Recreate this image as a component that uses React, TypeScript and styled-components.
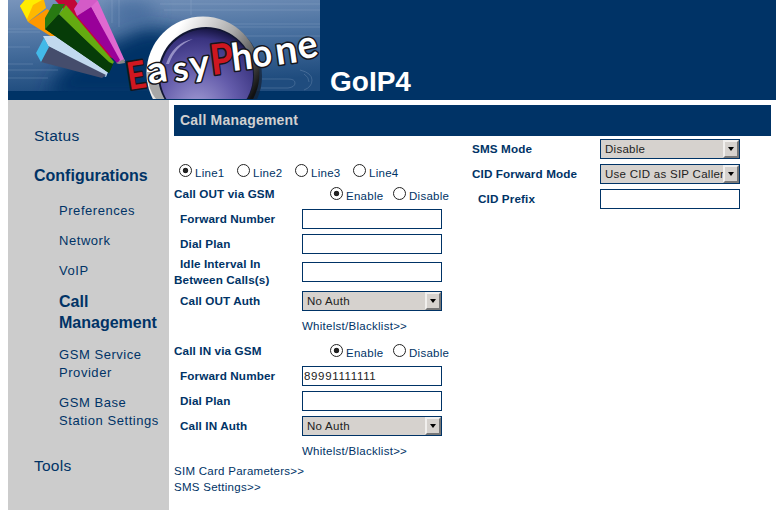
import React from "react";
import styled, { createGlobalStyle, css } from "styled-components";

const NAVY = "#003366";
const sans = `"Liberation Sans", Arial, Helvetica, sans-serif`;

const GlobalStyle = createGlobalStyle`
  * { box-sizing: border-box; }
  body { margin: 0; background: #fff; color: ${NAVY}; font: 11.5px ${sans}; letter-spacing: 0.27px; overflow: hidden; }
`;

const Page = styled.div`
  display: flex;
  flex-direction: column;
  width: 768px;
  height: 510px;
  margin: 0 8px;
`;

const Header = styled.header`
  display: flex;
  align-items: flex-end;
  gap: 10px;
  height: 100px;
  flex: none;
  background: ${NAVY};
`;

const Product = styled.h1`
  margin: 0;
  color: #fff;
  font: bold 28px/36px ${sans};
  letter-spacing: 0;
`;

const Body = styled.div`
  display: flex;
  flex: 1;
  min-height: 0;
`;

const Sidebar = styled.nav`
  display: flex;
  flex-direction: column;
  width: 161px;
  padding: 26px 0 0 26px;
  background: #ccc;
`;

const MenuItem = styled.a<{ $active?: boolean }>`
  margin-bottom: 20px;
  font-size: 15.5px;
  line-height: 20px;
  letter-spacing: 0.25px;
  ${(p) => p.$active && css`
    margin-bottom: 0;
    font-size: 16px;
    font-weight: bold;
    letter-spacing: 0;
  `}
`;

const SubMenu = styled.div`
  display: flex;
  flex-direction: column;
  gap: 12px;
  padding: 16px 0 26px 25px;
`;

const SubItem = styled.a<{ $active?: boolean }>`
  font-size: 13px;
  line-height: 18px;
  letter-spacing: 0.55px;
  white-space: nowrap;
  ${(p) => p.$active && css`
    margin: -1px 0 1px;
    font-size: 16px;
    font-weight: bold;
    line-height: 21px;
    letter-spacing: 0;
  `}
`;

const Main = styled.main`
  width: 597px;
  margin: 5px 0 0 5px;
`;

const TitleBar = styled.h2`
  height: 31px;
  margin: 0;
  padding-left: 6px;
  background: ${NAVY};
  color: #d0d0d0;
  font: bold 14px/30px ${sans};
  letter-spacing: 0.2px;
`;

const Columns = styled.div`
  display: grid;
  grid-template-columns: 298px 1fr;
`;

const LeftColumn = styled.section`
  display: flex;
  flex-direction: column;
`;

const RightColumn = styled.section`
  padding-top: 1px;
`;

const LineRow = styled.div`
  display: flex;
  height: 46px;
  padding: 28px 0 0 5px;
`;

const Row = styled.div<{ $tall?: boolean }>`
  display: grid;
  grid-template-columns: 128px 1fr;
  align-items: start;
  height: ${(p) => (p.$tall ? 32 : 25)}px;
  padding-top: ${(p) => (p.$tall ? 5 : 2)}px;
`;

const Label = styled.label<{ $indent?: boolean }>`
  padding-left: ${(p) => (p.$indent ? 6 : 0)}px;
  font-size: 11.7px;
  font-weight: bold;
  line-height: 20px;
  letter-spacing: 0.12px;
  white-space: nowrap;
`;

const WrappedLabel = styled(Label)`
  margin-top: -6px;
  padding: 0;
  line-height: 16px;
  text-indent: 6px;
  white-space: pre-line;
`;

const TextInput = styled.input`
  width: 140px;
  height: 20px;
  padding: 0 1px;
  border: 1px solid ${NAVY};
  border-radius: 0;
  background: #fff;
  color: #222;
  font: 11.5px ${sans};
  letter-spacing: 0.65px;
  outline: none;
`;

const SelectBox = styled.div`
  display: flex;
  width: 140px;
  height: 20px;
  border: 1px solid ${NAVY};
  background: #d6d2ce;
  color: #222;
`;

const SelectValue = styled.span`
  flex: 1;
  overflow: hidden;
  padding-left: 4px;
  line-height: 19px;
  white-space: nowrap;
`;

const ArrowButton = styled.span`
  display: flex;
  flex: none;
  align-items: center;
  justify-content: center;
  width: 16px;
  border: 2px solid;
  border-color: #f1efed #777 #777 #f1efed;
  background: #d6d2ce;
`;

const RadioGroup = styled.div`
  display: flex;
  padding: 3px 0 0 28px;
`;

const Option = styled.label<{ $width: number }>`
  display: flex;
  flex: none;
  gap: 3px;
  width: ${(p) => p.$width}px;
  line-height: 18px;
  white-space: nowrap;
`;

const Radio = styled.input`
  appearance: none;
  flex: none;
  width: 13px;
  height: 13px;
  margin: 0;
  border: 1px solid #222;
  border-radius: 50%;
  background: #fff;
  &:checked { background: radial-gradient(circle, #222 2.4px, #fff 3.1px); }
`;

const Link = styled.a`
  line-height: 20px;
`;

const Links = styled.div`
  display: flex;
  flex-direction: column;
  margin-top: -1px;
  a { line-height: 16px; }
`;

function Select({ value }: { value: string }) {
  return (
    <SelectBox>
      <SelectValue>{value}</SelectValue>
      <ArrowButton>
        <svg width="6" height="4"><path d="M0 0h6L3 4z" fill="#000" /></svg>
      </ArrowButton>
    </SelectBox>
  );
}

function Toggle({ name }: { name: string }) {
  return (
    <RadioGroup>
      <Option $width={63}><Radio type="radio" name={name} defaultChecked />Enable</Option>
      <Option $width={60}><Radio type="radio" name={name} />Disable</Option>
    </RadioGroup>
  );
}

const letters = [
  { c: "E", x: 129, y: 90, size: 38, angle: -9, red: true, w: 19 },
  { c: "a", x: 149, y: 84, size: 37, angle: -9, w: 20 },
  { c: "s", x: 175, y: 82, size: 35, angle: -10, w: 15 },
  { c: "y", x: 191, y: 77, size: 36, angle: -8, w: 20 },
  { c: "P", x: 212, y: 75, size: 42, angle: -7, red: true, w: 23 },
  { c: "h", x: 233, y: 71, size: 38, angle: -7, w: 21 },
  { c: "o", x: 254, y: 68, size: 38, angle: -10, w: 20 },
  { c: "n", x: 277, y: 65, size: 39, angle: -8, w: 22 },
  { c: "e", x: 300, y: 60, size: 39, angle: -12, w: 20 },
];

function Banner() {
  return (
    <svg width="312" height="100" viewBox="8 0 312 100">
      <defs>
        <linearGradient id="sky" x2="0.2" y2="1">
          <stop offset="0" stopColor="#7894bb" />
          <stop offset="0.5" stopColor="#49709f" />
          <stop offset="1" stopColor="#1f4c7e" />
        </linearGradient>
        <linearGradient id="rim" x2="1" y2="0.6">
          <stop offset="0.25" stopColor="#fff" />
          <stop offset="0.62" stopColor="#aaa" />
          <stop offset="0.85" stopColor="#555" />
          <stop offset="1" stopColor="#111" />
        </linearGradient>
        <radialGradient id="lens" cx="0.4" cy="0.85" r="0.85">
          <stop offset="0" stopColor="#a29cd4" />
          <stop offset="0.5" stopColor="#635baa" />
          <stop offset="0.88" stopColor="#39337f" />
          <stop offset="1" stopColor="#1b194a" />
        </radialGradient>
        <filter id="soft" x="-30%" y="-30%" width="160%" height="160%">
          <feGaussianBlur stdDeviation="9" />
        </filter>
      </defs>
      <rect x="8" width="312" height="91" fill="url(#sky)" />
      <path d="M50 90L65 65 110 45 145 28 190 35 205 100H50z" fill={NAVY} filter="url(#soft)" />
      <ellipse cx="133" cy="12" rx="24" ry="12" fill="#345f94" opacity="0.6" filter="url(#soft)" />
      <g stroke="#a9bdd7" strokeWidth="0.6" opacity="0.4">
        <path d="M8 29h38M8 32h32M8 47h22M8 64h25M160 4h160M164 10h156M220 24h100M235 27h85M245 36h75M112 0v23M119 0v27M191 0v15M8 70h50M8 78h40" />
        <path d="M262 79h26q7 0 7 4t-7 5h-27M300 70q12 3 12 10t-8 10M304 74q5 3 5 8" fill="none" />
      </g>
      <path d="M8 91l70 1 242-1v9H8z" fill={NAVY} />

      <path d="M55 0h20l42 60-10-4z" fill="#c10737" />
      <path d="M28 22L47 9l63 54-5 7z" fill="#ff9800" />
      <path d="M20 6l5-6h19l2 8-18 14z" fill="#ffb800" />
      <path d="M25 0h17l-9 5-6 14-7-13z" fill="#ffec00" />
      <path d="M43 36h17l48 36-2 5-58-31z" fill="#c1d9ee" />
      <path d="M41 62l7-16 58 29-4 3z" fill="#454d6c" />
      <path d="M36 53l8-15 5 9-8 15z" fill="#43b9e8" />
      <path d="M45 29l14-15 54 50-4 9z" fill="#063c08" />
      <path d="M59 14l7-9 48 57-3 4z" fill="#64aa11" />
      <path d="M45 29l13-15 51 48 4 2-4 9z" fill="#063c08" />
      <path d="M45 18L53 4l12 0-6 10-14 15z" fill="#287a12" />
      <path d="M77 16l14-9 32 51-5 6z" fill="#990099" />
      <path d="M90 1l8 0 27 60-6 1-28-55z" fill="#df69d0" />
      <path d="M77 16l14-9 29 53-3 3z" fill="#990099" />
      <path d="M74 9L80 0h18l-7 7-14 9z" fill="#d45bc7" />
      <path d="M116 63l8-4 1 4-6 1z" fill="#888" />

      <circle cx="205" cy="76" r="57" fill="#172235" opacity="0.7" />
      <circle cx="203" cy="73" r="56.5" fill="url(#rim)" />
      <path d="M147 72q1 18 9 27h9l-8-27z" fill="#a7a7a7" />
      <circle cx="206" cy="75" r="48" fill="#111633" />
      <circle cx="206.5" cy="75.5" r="46.5" fill="url(#lens)" />
      <path d="M166 64q7-21 27-25-18 7-24 25z" fill="#aaa5d4" opacity="0.8" />
      <path d="M8 99h312v1H8z" fill={NAVY} />

      {letters.map((l) => (
        <text
          key={l.x}
          transform={`translate(${l.x} ${l.y}) rotate(${l.angle})`}
          fontFamily='Lato, "Liberation Sans", sans-serif'
          fontWeight="bold"
          letterSpacing="0"
          fontSize={l.size}
          textLength={l.w}
          lengthAdjust="spacingAndGlyphs"
          fill={l.red ? "#cf1720" : "#fff"}
          stroke="#15151c"
          strokeWidth="3"
          strokeLinejoin="round"
          paintOrder="stroke"
        >
          {l.c}
        </text>
      ))}
    </svg>
  );
}

export default function App() {
  return (
    <>
      <GlobalStyle />
      <Page>
        <Header>
          <Banner />
          <Product>GoIP4</Product>
        </Header>
        <Body>
          <Sidebar>
            <MenuItem>Status</MenuItem>
            <MenuItem $active>Configurations</MenuItem>
            <SubMenu>
              <SubItem>Preferences</SubItem>
              <SubItem>Network</SubItem>
              <SubItem>VoIP</SubItem>
              <SubItem $active>Call<br />Management</SubItem>
              <SubItem>GSM Service<br />Provider</SubItem>
              <SubItem>GSM Base<br />Station Settings</SubItem>
            </SubMenu>
            <MenuItem>Tools</MenuItem>
          </Sidebar>
          <Main>
            <TitleBar>Call Management</TitleBar>
            <Columns>
              <LeftColumn>
                <LineRow>
                  {[1, 2, 3, 4].map((n) => (
                    <Option key={n} $width={58}>
                      <Radio type="radio" name="line" defaultChecked={n === 1} />
                      Line{n}
                    </Option>
                  ))}
                </LineRow>
                <Row><Label>Call OUT via GSM</Label><Toggle name="out" /></Row>
                <Row><Label $indent>Forward Number</Label><TextInput /></Row>
                <Row><Label $indent>Dial Plan</Label><TextInput /></Row>
                <Row $tall><WrappedLabel>Idle Interval In<br />Between Calls(s)</WrappedLabel><TextInput /></Row>
                <Row><Label $indent>Call OUT Auth</Label><Select value="No Auth" /></Row>
                <Row><span /><Link>Whitelst/Blacklist&gt;&gt;</Link></Row>
                <Row><Label>Call IN via GSM</Label><Toggle name="in" /></Row>
                <Row><Label $indent>Forward Number</Label><TextInput defaultValue="89991111111" /></Row>
                <Row><Label $indent>Dial Plan</Label><TextInput /></Row>
                <Row><Label $indent>Call IN Auth</Label><Select value="No Auth" /></Row>
                <Row><span /><Link>Whitelst/Blacklist&gt;&gt;</Link></Row>
                <Links>
                  <Link>SIM Card Parameters&gt;&gt;</Link>
                  <Link>SMS Settings&gt;&gt;</Link>
                </Links>
              </LeftColumn>
              <RightColumn>
                <Row><Label>SMS Mode</Label><Select value="Disable" /></Row>
                <Row><Label>CID Forward Mode</Label><Select value="Use CID as SIP Caller ID" /></Row>
                <Row><Label $indent>CID Prefix</Label><TextInput /></Row>
              </RightColumn>
            </Columns>
          </Main>
        </Body>
      </Page>
    </>
  );
}
